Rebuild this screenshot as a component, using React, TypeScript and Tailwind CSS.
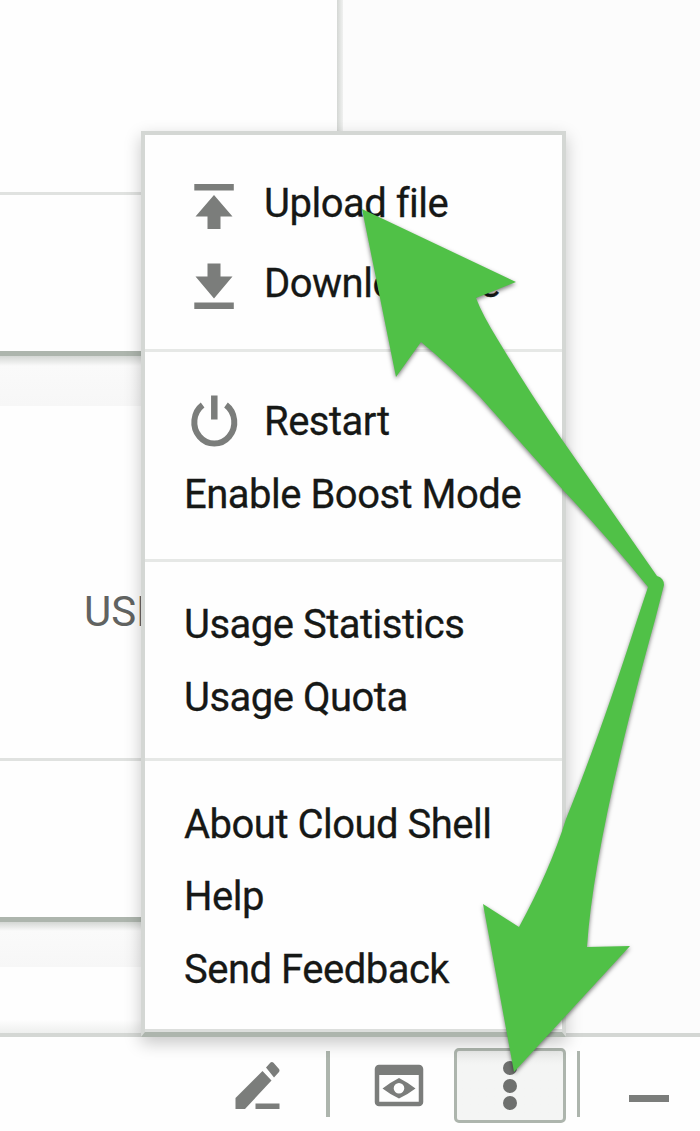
import type { ReactNode } from "react";

function Section({ className, children }: { className: string; children: ReactNode }) {
  return <div className={`flex flex-col ${className}`}>{children}</div>;
}

function Item({ label, icon, tall }: { label: string; icon?: ReactNode; tall?: boolean }) {
  return (
    <div className={`flex items-center pl-[39px] whitespace-pre ${tall ? "h-20" : "h-[72.5px]"}`}>
      {icon && <span className="w-[80px] shrink-0">{icon}</span>}
      <span>{label}</span>
    </div>
  );
}

const Divider = () => <div className="h-[3px] shrink-0 bg-[#e6e8e6]" />;

const UploadIcon = () => (
  <svg width="60" height="50" viewBox="0 0 60 50" fill="#7b7d7b">
    <path d="M10.300 5h39.500v6.500H10.300zM30 16l18.500 21.500h-12v13h-13v-13h-12z" />
  </svg>
);

const DownloadIcon = () => (
  <svg width="60" height="50" viewBox="0 0 60 50" fill="#7b7d7b">
    <path d="M23.500 4.500h13v13h12L30 39.500 11.500 17.500h12zM10.300 43.500h39.500v6.500H10.300z" />
  </svg>
);

const PowerIcon = () => (
  <svg width="60" height="60" viewBox="0 0 60 60" fill="none" stroke="#7b7d7b" strokeWidth="6">
    <path d="M30.300 3.500v24" strokeWidth="6.500" />
    <path d="M18.600 13A20 21.300 0 1 0 42 13" />
  </svg>
);

export default function App() {
  return (
    <main className="relative flex h-[1131px] w-[700px] flex-col overflow-hidden bg-[#fefefe] font-['Roboto',sans-serif]">
      <div className="flex h-[1033px] shrink-0">
        <div className="flex w-[337px] shrink-0 flex-col">
          <div className="h-[192px] shrink-0" />
          <div className="h-[3px] shrink-0 bg-[#e0e2e0]" />
          <div className="h-[156px] shrink-0" />
          <div className="h-[5px] shrink-0 bg-[#adb5ad]" />
          <div className="h-[50px] shrink-0 bg-linear-to-b from-[#d4d7d4] via-[#fafafa] via-20% to-[#f7f7f7]" />
          <div className="h-[352px] shrink-0 pt-[181px] pl-[84px] text-[42px] leading-[50px] text-[#616361]">USD</div>
          <div className="h-[3px] shrink-0 bg-[#e0e2e0]" />
          <div className="h-[156px] shrink-0" />
          <div className="h-[5px] shrink-0 bg-[#adb5ad]" />
          <div className="h-[45px] shrink-0 bg-linear-to-b from-[#d4d7d4] via-[#fafafa] via-20% to-[#f7f7f7]" />
          <div className="grow bg-linear-to-b from-[#fefefe] from-80% to-[#eeefee]" />
        </div>
        <div className="w-[6px] shrink-0 bg-linear-to-r from-[#d4d7d4] to-[#f0f1f0]" />
        <div className="grow bg-[#fcfcfc]" />
      </div>
      <div className="h-[4px] shrink-0 bg-[#d4d7d4]" />
      <footer className="flex h-[94px] shrink-0 items-start bg-[#fefefe]">
        <svg className="mt-[24px] ml-[234px] shrink-0" width="48" height="50" viewBox="0 0 48 50" fill="#7b7d7b">
          <path d="M1.500 37L28.500 10l9 9.500L11 48H1.500zM32 6.500l4.500-5q1.500-1.200 3 .3l5.500 6.200q1 1.500 0 3l-5 5.500zM21.500 42.500h24v5.500h-24z" />
        </svg>
        <div className="mt-[14px] ml-[44px] h-[66px] w-[4px] shrink-0 bg-[#adb5ad]" />
        <svg className="mt-[27px] ml-[44px] shrink-0" width="50" height="43" viewBox="0 0 50 43">
          <rect x="3" y="3" width="44" height="37" rx="2" fill="none" stroke="#7b7d7b" strokeWidth="4.500" />
          <path d="M3 3h44v8H3z" fill="#7b7d7b" />
          <path fillRule="evenodd" d="M8.500 24.500Q17 18 25 14q8 4 16.500 10.500Q33 31 25 34.500 17 31 8.500 24.500zM25 19a5.300 5.300 0 1 0 0 10.600 5.300 5.300 0 0 0 0-10.600z" fill="#7b7d7b" />
        </svg>
        <div className="mt-[11px] ml-[30px] flex h-[75px] w-[112px] shrink-0 flex-col items-center gap-[3.500px] rounded-[5px] border-[3px] border-[#adb5ad] bg-linear-to-b from-[#e9eae9] to-[#f4f5f4] to-20% pt-[10px] pr-px">
          <i className="size-[14px] shrink-0 rounded-full bg-[#6e706e]" />
          <i className="size-[14px] shrink-0 rounded-full bg-[#6e706e]" />
          <i className="size-[14px] shrink-0 rounded-full bg-[#6e706e]" />
        </div>
        <div className="mt-[14px] ml-[11px] h-[66px] w-[3px] shrink-0 bg-[#adb5ad]" />
        <div className="mt-[58px] ml-[49px] h-[7px] w-[40px] shrink-0 bg-[#7b7d7b]" />
      </footer>

      <nav className="absolute top-[131px] left-[141px] flex h-[906px] w-[425px] flex-col border-4 border-b-[5px] border-[#d4d7d4] border-b-[#adb5ad] bg-[#fefefe] text-[40px] leading-none tracking-[-0.5px] text-[#161816] shadow-[0_6px_16px_rgba(0,0,0,0.22)] [-webkit-text-stroke:0.3px_#161816]">
        <Section className="h-[214px] pt-[29px]">
          <Item label="Upload file" icon={<UploadIcon />} tall />
          <Item label="Download file" icon={<DownloadIcon />} tall />
        </Section>
        <Divider />
        <Section className="h-[207px] pt-[34px]">
          <Item label="Restart" icon={<PowerIcon />} />
          <Item label="Enable Boost Mode" />
        </Section>
        <Divider />
        <Section className="h-[196px] pt-[27px]">
          <Item label="Usage Statistics" />
          <Item label="Usage Quota" />
        </Section>
        <Divider />
        <Section className="grow pt-[27.500px]">
          <Item label="About Cloud Shell" />
          <Item label="Help" />
          <Item label="Send Feedback" />
        </Section>
        <div className="h-[3px] shrink-0 bg-[#dcdedc]" />
      </nav>

      <svg className="absolute inset-0 drop-shadow-[0_2px_2px_rgba(0,0,0,0.5)]" width="700" height="1131" viewBox="0 0 700 1131" fill="#50c147">
        <path d="M362 209L516 282 476 298Q482 314 498 340Q530 393 563 441L657 576Q664 578 664 585L655 620Q594 840 587 947L630 946 514 1072 483 904 519 927Q550 870 566 819Q600 735 637 620L648 587Q610 540 563 490L480 397Q450 366 421 342L396 377z" />
      </svg>
    </main>
  );
}
